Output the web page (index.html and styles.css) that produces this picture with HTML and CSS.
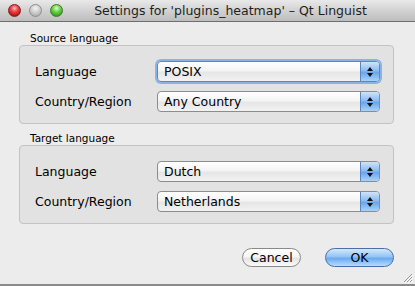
FILE: index.html
```html
<!DOCTYPE html>
<html>
<head>
<meta charset="utf-8">
<link rel="stylesheet" href="styles.css">
</head>
<body>
<div class="window">
  <div class="titlebar">
    <div class="lights">
      <span class="light red"></span>
      <span class="light gray"></span>
      <span class="light green"></span>
    </div>
    <div class="title">Settings for 'plugins_heatmap' – Qt Linguist</div>
  </div>
  <div class="content">
    <div class="group">
      <div class="group-label">Source language</div>
      <div class="group-box">
        <div class="row">
          <span class="label">Language</span>
          <div class="combo focused"><span class="combo-text">POSIX</span><span class="combo-arrow"><span class="up"></span><span class="down"></span></span></div>
        </div>
        <div class="row">
          <span class="label">Country/Region</span>
          <div class="combo"><span class="combo-text">Any Country</span><span class="combo-arrow"><span class="up"></span><span class="down"></span></span></div>
        </div>
      </div>
    </div>
    <div class="group second">
      <div class="group-label">Target language</div>
      <div class="group-box">
        <div class="row">
          <span class="label">Language</span>
          <div class="combo"><span class="combo-text">Dutch</span><span class="combo-arrow"><span class="up"></span><span class="down"></span></span></div>
        </div>
        <div class="row">
          <span class="label">Country/Region</span>
          <div class="combo"><span class="combo-text">Netherlands</span><span class="combo-arrow"><span class="up"></span><span class="down"></span></span></div>
        </div>
      </div>
    </div>
    <div class="buttons">
      <button class="btn cancel">Cancel</button>
      <button class="btn ok">OK</button>
    </div>
  </div>
  <svg class="grip" width="10" height="10" viewBox="0 0 10 10">
    <path d="M9 1 L1 9 M9 4 L4 9 M9 7 L7 9" stroke="#9a9a9a" stroke-width="1"/>
    <path d="M10 2 L2 10 M10 5 L5 10 M10 8 L8 10" stroke="#ffffff" stroke-width="1"/>
  </svg>
</div>
</body>
</html>
```
FILE: styles.css
```css
html, body {
  margin: 0;
  padding: 0;
}
body {
  width: 415px;
  height: 286px;
  overflow: hidden;
  font-family: "DejaVu Sans", "Liberation Sans", sans-serif;
  color: #000;
  background: #ececec;
}
.window {
  position: relative;
  width: 415px;
  height: 286px;
  box-sizing: border-box;
  background: #ececec;
  border-bottom: 2px solid #8a8a8a;
  display: flex;
  flex-direction: column;
}
.titlebar {
  height: 22px;
  box-sizing: border-box;
  border-bottom: 1px solid #6e6e6e;
  background: linear-gradient(#e9e9e9, #d2d2d2 50%, #bdbdbd);
  display: flex;
  align-items: center;
  position: relative;
}
.lights {
  display: flex;
  gap: 8px;
  padding-left: 8px;
}
.light {
  width: 13px;
  height: 13px;
  border-radius: 50%;
  box-sizing: border-box;
}
.light.red {
  background: radial-gradient(circle at 50% 30%, #ffc0c0 0, #f0484c 35%, #b80e16 80%);
  border: 1px solid #8a1a1a;
}
.light.gray {
  background: radial-gradient(circle at 50% 30%, #f4f4f4 0, #cfcfcf 45%, #a8a8a8 90%);
  border: 1px solid #8e8e8e;
}
.light.green {
  background: radial-gradient(circle at 50% 30%, #dfffc8 0, #6ad24a 40%, #2a9a1a 85%);
  border: 1px solid #3c7a22;
}
.title {
  position: absolute;
  left: 0;
  right: 0;
  top: 0;
  line-height: 21px;
  text-align: center;
  font-size: 12.5px;
  color: #1e1e1e;
  padding-left: 46px;
}
.content {
  display: flex;
  flex-direction: column;
  padding: 10px 21px 0 19px;
}
.group.second {
  margin-top: 8px;
}
.group-label {
  font-size: 10.5px;
  line-height: 13px;
  padding-left: 11px;
  color: #000;
}
.group-box {
  margin-top: 0;
  border: 1px solid #c3c3c3;
  border-radius: 4px;
  background: #e2e2e2;
  padding: 15px 13px 11px 14px;
  display: flex;
  flex-direction: column;
  gap: 9px;
}
.row {
  display: flex;
  align-items: center;
  height: 21px;
}
.label {
  width: 122px;
  font-size: 12.5px;
  padding-left: 1px;
}
.combo {
  flex: 1;
  height: 21px;
  box-sizing: border-box;
  border: 1px solid #8c8c8c;
  border-radius: 4px;
  background: linear-gradient(#ffffff, #f4f4f4 45%, #e6e6e6 55%, #f2f2f2);
  display: flex;
  align-items: center;
  overflow: hidden;
}
.combo.focused {
  border-color: #5a86c4;
  box-shadow: 0 0 0 2px rgba(110, 160, 230, 0.75);
}
.combo-text {
  flex: 1;
  font-size: 12.5px;
  padding-left: 6px;
}
.combo-arrow {
  width: 18px;
  height: 100%;
  border-left: 1px solid #5c84bf;
  background: linear-gradient(#cfe4fa, #8cbcf0 45%, #6aa6ec 55%, #a8d2fa);
  display: flex;
  flex-direction: column;
  align-items: center;
  justify-content: center;
  gap: 2px;
}
.up {
  width: 0;
  height: 0;
  border-left: 3px solid transparent;
  border-right: 3px solid transparent;
  border-bottom: 4px solid #111;
}
.down {
  width: 0;
  height: 0;
  border-left: 3px solid transparent;
  border-right: 3px solid transparent;
  border-top: 4px solid #111;
}
.buttons {
  display: flex;
  justify-content: flex-end;
  gap: 24px;
  margin-top: 24px;
  padding-right: 0;
}
.btn {
  height: 19px;
  border-radius: 10px;
  font-family: "DejaVu Sans", "Liberation Sans", sans-serif;
  font-size: 12.5px;
  line-height: 17px;
  padding: 0;
  box-sizing: border-box;
  color: #000;
}
.cancel {
  width: 59px;
  border: 1px solid #8a8a8a;
  background: linear-gradient(#ffffff, #f6f6f6 45%, #e4e4e4 55%, #fafafa);
}
.ok {
  width: 69px;
  border: 1px solid #4a6fa8;
  background: linear-gradient(#d4e8fc, #94c4f4 45%, #6aaaf0 55%, #b4dcff);
}
.grip {
  position: absolute;
  right: 2px;
  bottom: 1px;
}
```
